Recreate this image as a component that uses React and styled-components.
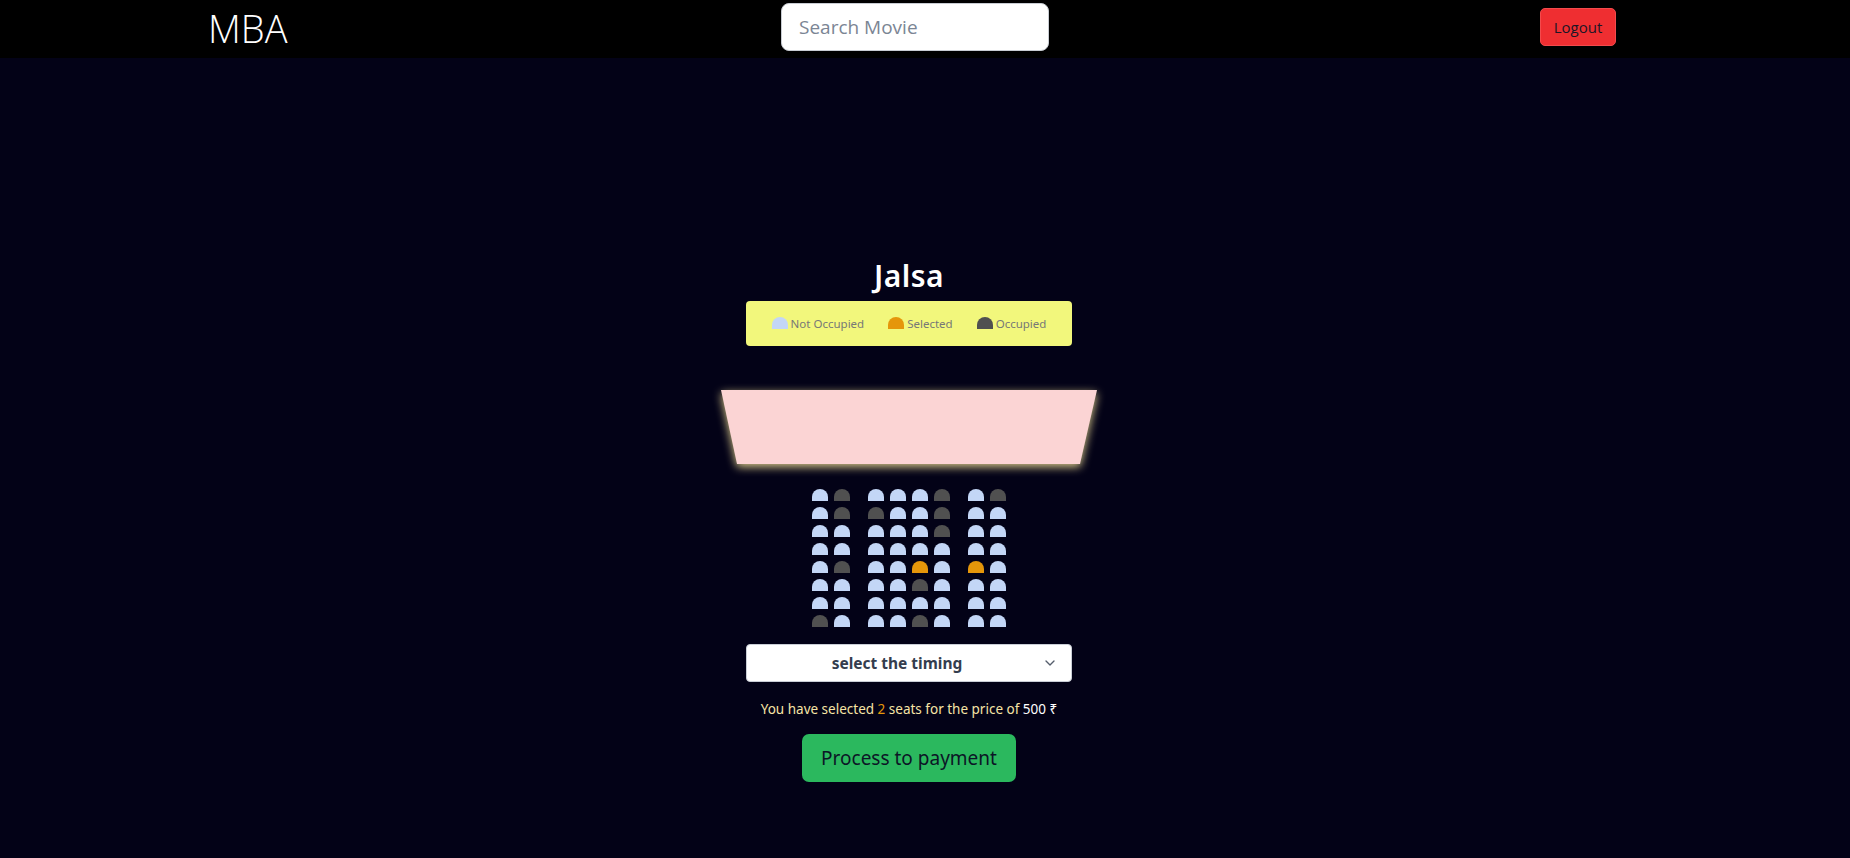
import React from 'react';
import styled, { createGlobalStyle } from 'styled-components';
import { ChevronDown } from 'lucide-react';

const GlobalStyle = createGlobalStyle`
    body {
        margin: 0;
        background: #030217;
        font-family: "Open Sans", "Noto Sans", sans-serif;
    }
`

const Page = styled.div`
    min-height: 858px;
    background: #030217;
`

const Nav = styled.nav`
    height: 58px;
    background: #000;
    display: flex;
    align-items: center;
    padding: 0 234px 0 208px;
`

const Brand = styled.div`
    width: 573px;
    color: #fff;
    font-family: "Open Sans", sans-serif;
    font-weight: 300;
    font-size: 38px;
    line-height: 1;
    margin-top: -2px;
`

const Search = styled.input`
    width: 268px;
    height: 48px;
    box-sizing: border-box;
    border: 1px solid #c8ccd2;
    border-radius: 8px;
    padding: 0 17px;
    font-family: "Open Sans", sans-serif;
    font-size: 19px;
    outline: none;
    margin-top: -4px;
    &::placeholder {
        color: #7b8594;
    }
`

const Logout = styled.button`
    margin-left: auto;
    width: 76px;
    height: 38px;
    margin-top: -4px;
    background: #ef2e31;
    border: 1px solid #f34a4c;
    border-radius: 5px;
    color: #1b1626;
    font-family: "Open Sans", sans-serif;
    font-size: 15px;
    padding: 0;
`

const Main = styled.main`
    display: flex;
    flex-direction: column;
    align-items: center;
    padding-right: 32px;
    padding-top: 198px;
`

const Title = styled.h1`
    margin: 0;
    color: #fff;
    font-family: "Noto Sans", sans-serif;
    font-weight: 600;
    font-size: 30px;
    line-height: 40px;
    letter-spacing: 0.5px;
`

const Legend = styled.ul`
    list-style: none;
    margin: 5px 0 0;
    padding: 0;
    width: 326px;
    height: 45px;
    background: #f2f77c;
    border-radius: 4px;
    display: flex;
    align-items: center;
    justify-content: center;
    gap: 24px;
`

const LegendItem = styled.li`
    display: flex;
    align-items: center;
    gap: 3px;
    color: #777;
    font-family: "Noto Sans", sans-serif;
    font-size: 11.5px;
`

const Seat = styled.div`
    width: 16px;
    height: 12px;
    border-radius: 10px 10px 0 0;
    background: ${(p) => p.kind === 'sel' ? '#e5960a' : p.kind === 'occ' ? '#505050' : '#c3d6f6'};
    margin: ${(p) => p.legend ? '0 0 2px' : '3px'};
    &:nth-of-type(2) {
        margin-right: ${(p) => p.legend ? '0' : '15px'};
    }
    &:nth-last-of-type(2) {
        margin-left: ${(p) => p.legend ? '0' : '15px'};
    }
`

const ScreenGlow = styled.div`
    margin-top: 44px;
    filter: drop-shadow(0 3px 5px rgba(255, 236, 160, 0.85));
`

const Screen = styled.div`
    width: 376px;
    height: 74px;
    background: #fbd4d4;
    clip-path: polygon(0 0, 100% 0, calc(100% - 17px) 100%, 16px 100%);
`

const Seats = styled.div`
    margin-top: 22px;
    display: flex;
    flex-direction: column;
`

const SeatRow = styled.div`
    display: flex;
`

const SelectWrap = styled.div`
    position: relative;
    margin-top: 14px;
`

const Select = styled.select`
    width: 326px;
    height: 38px;
    appearance: none;
    background: #fff;
    border: 1px solid #c9ced6;
    border-radius: 4px;
    padding: 0 36px 0 12px;
    text-align: center;
    text-align-last: center;
    font-family: "Noto Sans", sans-serif;
    font-weight: 700;
    font-size: 15.5px;
    color: #343d4e;
    outline: none;
`

const Chevron = styled.span`
    position: absolute;
    right: 14px;
    top: 11px;
    color: #555e6c;
    display: flex;
    pointer-events: none;
`

const Summary = styled.p`
    margin: 18px 0 0;
    font-family: "Noto Sans", sans-serif;
    font-size: 13.5px;
    color: #f6e4a6;
`

const Hl = styled.span`
    color: ${(p) => p.tone === 'orange' ? '#e5960a' : '#fff'};
`

const PayButton = styled.button`
    margin-top: 16px;
    width: 214px;
    height: 48px;
    background: #2bb85e;
    border: none;
    border-radius: 7px;
    color: #0c1626;
    font-family: "Noto Sans", sans-serif;
    font-size: 19px;
    padding: 0;
`

const layout = [
    'LOLLLOLO',
    'LOOLLOLL',
    'LLLLLOLL',
    'LLLLLLLL',
    'LOLLSLSL',
    'LLLLOLLL',
    'LLLLLLLL',
    'OLLLOLLL',
]

const kindOf = { L: 'free', O: 'occ', S: 'sel' }

const App = () => {
    return (
        <Page>
            <GlobalStyle />
            <Nav>
                <Brand>MBA</Brand>
                <Search placeholder="Search Movie" />
                <Logout>Logout</Logout>
            </Nav>
            <Main>
                <Title>Jalsa</Title>
                <Legend>
                    <LegendItem><Seat legend kind="free" /> Not Occupied</LegendItem>
                    <LegendItem><Seat legend kind="sel" /> Selected</LegendItem>
                    <LegendItem><Seat legend kind="occ" /> Occupied</LegendItem>
                </Legend>
                <ScreenGlow>
                    <Screen />
                </ScreenGlow>
                <Seats>
                    {layout.map((row, i) => (
                        <SeatRow key={i}>
                            {row.split('').map((c, j) => <Seat key={j} kind={kindOf[c]} />)}
                        </SeatRow>
                    ))}
                </Seats>
                <SelectWrap>
                    <Select defaultValue="">
                        <option value="">select the timing</option>
                    </Select>
                    <Chevron><ChevronDown size={16} strokeWidth={2} /></Chevron>
                </SelectWrap>
                <Summary>
                    You have selected <Hl tone="orange">2</Hl> seats for the price of <Hl>500 ₹</Hl>
                </Summary>
                <PayButton>Process to payment</PayButton>
            </Main>
        </Page>
    );
}

export default App;
